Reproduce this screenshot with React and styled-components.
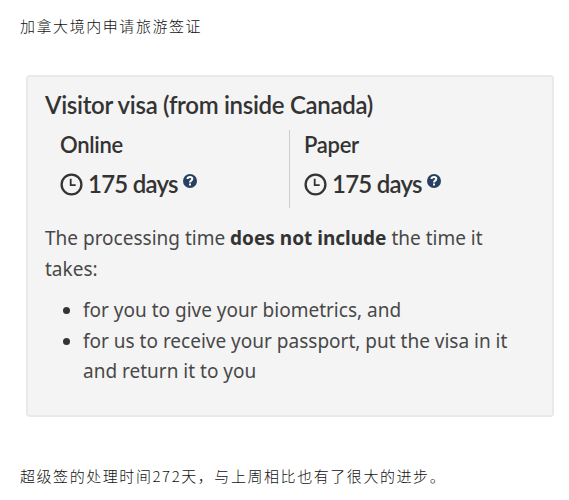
import React from "react";
import styled, { createGlobalStyle } from "styled-components";

const Global = createGlobalStyle`
  * { box-sizing: border-box; }
  html, body { margin: 0; background: #fff; }
`;
const Article = styled.main`
  height: 500px;
  padding: 14px 15px 0 20px;
  overflow: hidden;
`;
const Paragraph = styled.p`
  margin: 0;
  height: 24px;
  font: 300 15px/24px "Noto Sans CJK SC", sans-serif;
  letter-spacing: 1.56px;
  color: #111;
  white-space: nowrap;
`;
const Panel = styled.section`
  width: 528px;
  height: 342px;
  margin: 37px 0 47px 6px;
  padding: 13px 18px;
  border: 2px solid #e9e9e9;
  border-radius: 4px;
  background: #f4f4f4;
  color: #333;
`;
const Title = styled.h2`
  margin: -1px 0 0 -1px;
  font: 600 24px/32px Lato, sans-serif;
  letter-spacing: -0.3px;
  white-space: nowrap;
`;
const Options = styled.div`
  display: grid;
  grid-template-columns: 244px 1fr;
  height: 78px;
  margin-top: 9px;
`;
const Option = styled.div`
  padding-left: 14px;
  border-right: ${(p) => (p.$divided ? "1px solid #ccc" : "0")};
`;
const Method = styled.h3`
  margin: 0;
  font: 600 22px/30px Lato, sans-serif;
  letter-spacing: -0.3px;
`;
const Duration = styled.div`
  display: flex;
  align-items: center;
  margin-top: 8px;
  height: 32px;
  font: 600 24px/32px Lato, sans-serif;
  letter-spacing: -0.75px;
  white-space: nowrap;
`;
const Clock = styled.svg`
  width: 23px;
  height: 23px;
  margin-right: 5px;
`;
const Help = styled.svg`
  width: 14px;
  height: 14px;
  margin: -7px 0 0 5px;
`;
const Note = styled.p`
  margin: 15px 0 0 -1px;
  font: 19px/30.5px "Noto Sans", sans-serif;
  color: #484848;
  strong { color: #333; }
`;
const List = styled.ul`
  margin: 11px 0 0 -1px;
  padding-left: 38px;
  font: 19px/30.5px "Noto Sans", sans-serif;
  color: #484848;
  li::marker { color: #333; }
`;

const Wait = ({ method, divided }) => (
  <Option $divided={divided}>
    <Method>{method}</Method>
    <Duration>
      <Clock viewBox="0 0 23 23" fill="none" stroke="#333" strokeWidth="2.3">
        <circle cx="11.5" cy="11.5" r="9.9" />
        <path d="M10.7 5.8v6.4h5" strokeWidth="1.8" />
      </Clock>
      <span>175 days</span>
      <Help viewBox="0 0 14 14">
        <circle cx="7" cy="7" r="7" fill="#284162" />
        <path d="M4.5 5C4.8 2.4 9.3 2.4 9.3 5c0 1.7-2.3 1.5-2.3 3.4M7 9.5v2" fill="none" stroke="#fff" strokeWidth="2" />
      </Help>
    </Duration>
  </Option>
);

export default function App() {
  return (
    <>
      <Global />
      <Article>
        <Paragraph>加拿大境内申请旅游签证</Paragraph>
        <Panel>
          <Title>Visitor visa (from inside Canada)</Title>
          <Options>
            <Wait method="Online" divided />
            <Wait method="Paper" />
          </Options>
          <Note>The processing time <strong>does not include</strong> the time it<br />takes:</Note>
          <List>
            <li>for you to give your biometrics, and</li>
            <li>for us to receive your passport, put the visa in it<br />and return it to you</li>
          </List>
        </Panel>
        <Paragraph>超级签的处理时间272天，与上周相比也有了很大的进步。</Paragraph>
      </Article>
    </>
  );
}
